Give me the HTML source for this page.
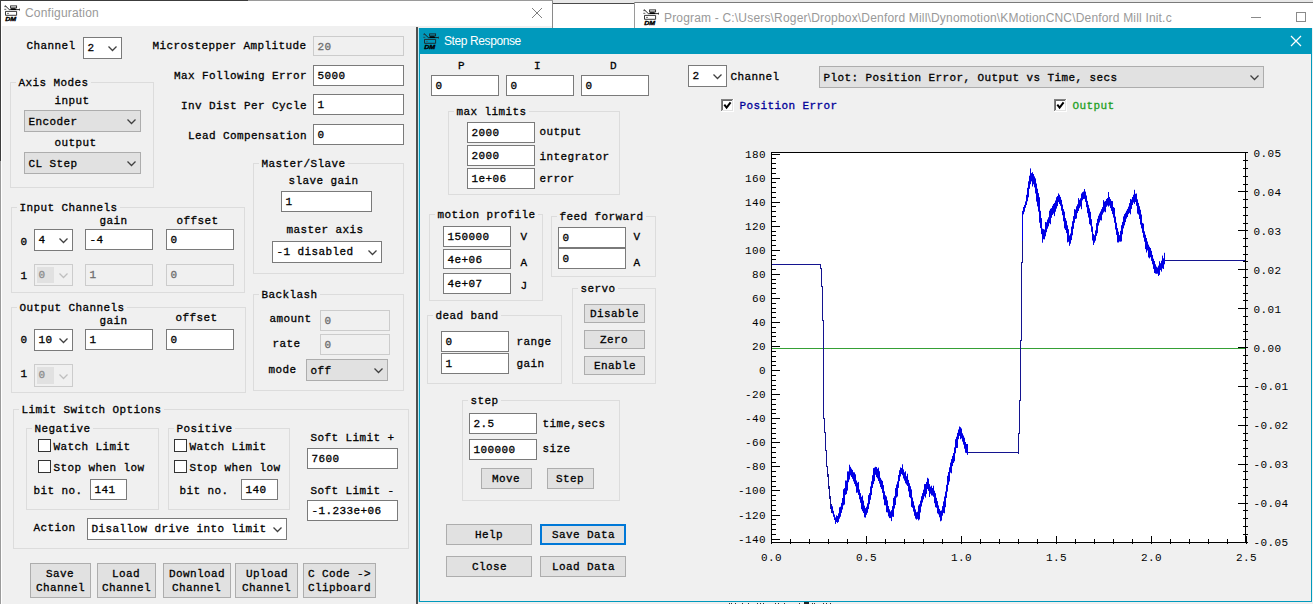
<!DOCTYPE html><html><head><meta charset="utf-8"><style>
*{margin:0;padding:0}
html,body{width:1313px;height:604px;overflow:hidden;background:#f0f0f0;position:relative}
.a{position:absolute}
.m{position:absolute;font:11px 'Liberation Mono',monospace;letter-spacing:0.4px;line-height:13px;white-space:pre;color:#000;-webkit-text-stroke-width:0.3px}
.r{position:absolute;font:11px 'Liberation Mono',monospace;letter-spacing:0.4px;line-height:13px;white-space:pre;color:#000}
.s{position:absolute;font:12px 'Liberation Sans',sans-serif;line-height:15px;white-space:pre}
</style></head><body><div class="a" style="left:552px;top:0px;width:761px;height:2px;background:#e8e8e8;"></div>
<div class="a" style="left:552px;top:2px;width:82px;height:1px;background:#e8e8e8;"></div>
<div class="a" style="left:552px;top:3px;width:82px;height:1px;background:#4a4a4a;"></div>
<div class="a" style="left:552px;top:4px;width:82px;height:24px;background:#ffffff;"></div>
<div class="a" style="left:634px;top:2px;width:679px;height:26px;background:#ffffff;"></div>
<div class="a" style="left:634px;top:2px;width:679px;height:1px;background:#7a7a7a;"></div>
<div class="a" style="left:634px;top:2px;width:1px;height:26px;background:#9a9a9a;"></div>
<div class="a" style="left:0px;top:0px;width:553px;height:604px;background:#f0f0f0;"></div>
<div class="a" style="left:0px;top:0px;width:248px;height:1px;background:#3c3c3c;"></div>
<div class="a" style="left:248px;top:0px;width:305px;height:1px;background:#9a9a9a;"></div>
<div class="a" style="left:0px;top:0px;width:1px;height:161px;background:#3c3c3c;"></div>
<div class="a" style="left:0px;top:161px;width:1px;height:443px;background:#9a9a9a;"></div>
<div class="a" style="left:1px;top:1px;width:551px;height:25px;background:#ffffff;"></div>
<div class="a" style="left:1px;top:26px;width:1px;height:578px;background:#ffffff;"></div>
<div class="a" style="left:552px;top:1px;width:1px;height:603px;background:#8a8a8a;"></div>
<svg class="a" style="left:4px;top:5px" width="17" height="17" viewBox="0 0 17 17">
<path d="M0.8 0.3L5.3 4.6H16" stroke="#111" stroke-width="0.9" fill="none"/>
<path d="M0.3 1.6h2M0.3 4.3h2M15.5 3.6v2" stroke="#333" stroke-width="0.8" fill="none"/>
<rect x="6.6" y="0.9" width="6" height="2" fill="none" stroke="#222" stroke-width="0.9"/>
<path d="M6.6 3.2H11.4L12.2 5H7.2Z" fill="#000"/>
<path d="M1.5 6.4H12.6V10.3H1.5Z" fill="none" stroke="#222" stroke-width="0.9"/>
<path d="M3 8.4H5" stroke="#555" stroke-width="0.8"/>
<text x="1.2" y="15.8" font-family="Liberation Sans" font-weight="bold" font-style="italic" font-size="6" textLength="11" lengthAdjust="spacingAndGlyphs" fill="#000" stroke="#000" stroke-width="0.35">DM</text>
</svg>
<div class="s" style="left:25px;top:6px;color:#999999;letter-spacing:0.2px">Configuration</div>
<svg class="a" style="left:531px;top:7px" width="12" height="12"><path d="M1 1L11 11M11 1L1 11" stroke="#707070" stroke-width="0.9"/></svg>
<svg class="a" style="left:643px;top:9px" width="17" height="17" viewBox="0 0 17 17">
<path d="M0.8 0.3L5.3 4.6H16" stroke="#111" stroke-width="0.9" fill="none"/>
<path d="M0.3 1.6h2M0.3 4.3h2M15.5 3.6v2" stroke="#333" stroke-width="0.8" fill="none"/>
<rect x="6.6" y="0.9" width="6" height="2" fill="none" stroke="#222" stroke-width="0.9"/>
<path d="M6.6 3.2H11.4L12.2 5H7.2Z" fill="#000"/>
<path d="M1.5 6.4H12.6V10.3H1.5Z" fill="none" stroke="#222" stroke-width="0.9"/>
<path d="M3 8.4H5" stroke="#555" stroke-width="0.8"/>
<text x="1.2" y="15.8" font-family="Liberation Sans" font-weight="bold" font-style="italic" font-size="6" textLength="11" lengthAdjust="spacingAndGlyphs" fill="#000" stroke="#000" stroke-width="0.35">DM</text>
</svg>
<div class="s" style="left:664px;top:11px;color:#999999;letter-spacing:0.18px">Program - C:\Users\Roger\Dropbox\Denford Mill\Dynomotion\KMotionCNC\Denford Mill Init.c</div>
<div class="a" style="left:1251px;top:17px;width:10px;height:1px;background:#8a8a8a;"></div>
<div class="a" style="left:1296px;top:12px;width:10px;height:10px;box-shadow:inset 0 0 0 1px #8a8a8a;"></div>
<div class="m" style="left:26.5px;top:40px;">Channel</div>
<div class="a" style="left:83px;top:37px;width:39px;height:22px;background:#ffffff;box-shadow:inset 0 0 0 1px #7a7a7a;"></div>
<div class="m" style="left:87.5px;top:42px;">2</div>
<svg class="a" style="left:108px;top:46px" width="9" height="6"><path d="M0.5 0.5 L4.5 4.5 L8.5 0.5" fill="none" stroke="#404040" stroke-width="1.25"/></svg>
<div class="m" style="left:152.5px;top:40px;">Microstepper Amplitude</div>
<div class="a" style="left:313px;top:36px;width:91px;height:20px;background:#f0f0f0;box-shadow:inset 0 0 0 1px #cccccc;"></div>
<div class="m" style="left:317.5px;top:41px;color:#6d6d6d;">20</div>
<div class="m" style="left:174px;top:70px;">Max Following Error</div>
<div class="a" style="left:313px;top:65px;width:91px;height:21px;background:#ffffff;box-shadow:inset 0 0 0 1px #7a7a7a;"></div>
<div class="m" style="left:317.5px;top:70px;">5000</div>
<div class="m" style="left:181px;top:100px;">Inv Dist Per Cycle</div>
<div class="a" style="left:313px;top:94px;width:91px;height:21px;background:#ffffff;box-shadow:inset 0 0 0 1px #7a7a7a;"></div>
<div class="m" style="left:317.5px;top:99px;">1</div>
<div class="m" style="left:188px;top:130px;">Lead Compensation</div>
<div class="a" style="left:313px;top:124px;width:91px;height:21px;background:#ffffff;box-shadow:inset 0 0 0 1px #7a7a7a;"></div>
<div class="m" style="left:317.5px;top:129px;">0</div>
<div class="a" style="left:10px;top:82px;width:144px;height:106px;box-shadow:inset 0 0 0 1px #dcdcdc;"></div>
<div class="a" style="left:16px;top:77px;width:75px;height:9px;background:#f0f0f0;"></div>
<div class="m" style="left:18.5px;top:77px;">Axis Modes</div>
<div class="m" style="left:54.5px;top:95px;">input</div>
<div class="a" style="left:24px;top:110px;width:117px;height:22px;background:#e1e1e1;box-shadow:inset 0 0 0 1px #adadad;"></div>
<div class="m" style="left:28.5px;top:116px;">Encoder</div>
<svg class="a" style="left:127px;top:119px" width="9" height="6"><path d="M0.5 0.5 L4.5 4.5 L8.5 0.5" fill="none" stroke="#404040" stroke-width="1.25"/></svg>
<div class="m" style="left:54.5px;top:137px;">output</div>
<div class="a" style="left:24px;top:152px;width:117px;height:22px;background:#e1e1e1;box-shadow:inset 0 0 0 1px #adadad;"></div>
<div class="m" style="left:28.5px;top:158px;">CL Step</div>
<svg class="a" style="left:127px;top:161px" width="9" height="6"><path d="M0.5 0.5 L4.5 4.5 L8.5 0.5" fill="none" stroke="#404040" stroke-width="1.25"/></svg>
<div class="a" style="left:253px;top:163px;width:151px;height:111px;box-shadow:inset 0 0 0 1px #dcdcdc;"></div>
<div class="a" style="left:259px;top:158px;width:89px;height:9px;background:#f0f0f0;"></div>
<div class="m" style="left:261.5px;top:158px;">Master/Slave</div>
<div class="m" style="left:288.5px;top:175px;">slave gain</div>
<div class="a" style="left:281px;top:191px;width:91px;height:21px;background:#ffffff;box-shadow:inset 0 0 0 1px #7a7a7a;"></div>
<div class="m" style="left:285.5px;top:196px;">1</div>
<div class="m" style="left:286.5px;top:224px;">master axis</div>
<div class="a" style="left:272px;top:241px;width:110px;height:22px;background:#ffffff;box-shadow:inset 0 0 0 1px #7a7a7a;"></div>
<div class="m" style="left:276.5px;top:246px;">-1 disabled</div>
<svg class="a" style="left:368px;top:250px" width="9" height="6"><path d="M0.5 0.5 L4.5 4.5 L8.5 0.5" fill="none" stroke="#404040" stroke-width="1.25"/></svg>
<div class="a" style="left:11px;top:207px;width:234px;height:86px;box-shadow:inset 0 0 0 1px #dcdcdc;"></div>
<div class="a" style="left:17px;top:202px;width:103px;height:9px;background:#f0f0f0;"></div>
<div class="m" style="left:19.5px;top:202px;">Input Channels</div>
<div class="m" style="left:99.5px;top:215px;">gain</div>
<div class="m" style="left:176.5px;top:215px;">offset</div>
<div class="m" style="left:20.5px;top:236px;">0</div>
<div class="a" style="left:34px;top:229px;width:39px;height:22px;background:#ffffff;box-shadow:inset 0 0 0 1px #7a7a7a;"></div>
<div class="m" style="left:38.5px;top:234px;">4</div>
<svg class="a" style="left:59px;top:238px" width="9" height="6"><path d="M0.5 0.5 L4.5 4.5 L8.5 0.5" fill="none" stroke="#404040" stroke-width="1.25"/></svg>
<div class="a" style="left:85px;top:229px;width:68px;height:21px;background:#ffffff;box-shadow:inset 0 0 0 1px #7a7a7a;"></div>
<div class="m" style="left:89.5px;top:234px;">-4</div>
<div class="a" style="left:166px;top:229px;width:68px;height:21px;background:#ffffff;box-shadow:inset 0 0 0 1px #7a7a7a;"></div>
<div class="m" style="left:170.5px;top:234px;">0</div>
<div class="m" style="left:20.5px;top:270px;">1</div>
<div class="a" style="left:34px;top:264px;width:39px;height:22px;background:#f0f0f0;box-shadow:inset 0 0 0 1px #cccccc;"></div>
<div class="a" style="left:37px;top:267px;width:17px;height:16px;background:#e1e1e1;"></div>
<div class="m" style="left:38.5px;top:269px;color:#8d8d8d;font-weight:normal;">0</div>
<svg class="a" style="left:59px;top:273px" width="9" height="6"><path d="M0.5 0.5 L4.5 4.5 L8.5 0.5" fill="none" stroke="#bfbfbf" stroke-width="1.25"/></svg>
<div class="a" style="left:85px;top:264px;width:68px;height:22px;background:#f0f0f0;box-shadow:inset 0 0 0 1px #cccccc;"></div>
<div class="m" style="left:89.5px;top:269px;color:#6d6d6d;">1</div>
<div class="a" style="left:166px;top:264px;width:68px;height:22px;background:#f0f0f0;box-shadow:inset 0 0 0 1px #cccccc;"></div>
<div class="m" style="left:170.5px;top:269px;color:#6d6d6d;">0</div>
<div class="a" style="left:11px;top:307px;width:235px;height:86px;box-shadow:inset 0 0 0 1px #dcdcdc;"></div>
<div class="a" style="left:17px;top:302px;width:110px;height:9px;background:#f0f0f0;"></div>
<div class="m" style="left:19.5px;top:302px;">Output Channels</div>
<div class="m" style="left:99.5px;top:315px;">gain</div>
<div class="m" style="left:175.5px;top:312px;">offset</div>
<div class="m" style="left:20.5px;top:334px;">0</div>
<div class="a" style="left:34px;top:329px;width:39px;height:22px;background:#ffffff;box-shadow:inset 0 0 0 1px #7a7a7a;"></div>
<div class="m" style="left:38.5px;top:334px;">10</div>
<svg class="a" style="left:59px;top:338px" width="9" height="6"><path d="M0.5 0.5 L4.5 4.5 L8.5 0.5" fill="none" stroke="#404040" stroke-width="1.25"/></svg>
<div class="a" style="left:85px;top:329px;width:68px;height:21px;background:#ffffff;box-shadow:inset 0 0 0 1px #7a7a7a;"></div>
<div class="m" style="left:89.5px;top:334px;">1</div>
<div class="a" style="left:166px;top:329px;width:68px;height:21px;background:#ffffff;box-shadow:inset 0 0 0 1px #7a7a7a;"></div>
<div class="m" style="left:170.5px;top:334px;">0</div>
<div class="m" style="left:20.5px;top:368px;">1</div>
<div class="a" style="left:34px;top:364px;width:39px;height:23px;background:#f0f0f0;box-shadow:inset 0 0 0 1px #cccccc;"></div>
<div class="a" style="left:37px;top:367px;width:17px;height:17px;background:#e1e1e1;"></div>
<div class="m" style="left:38.5px;top:369px;color:#8d8d8d;font-weight:normal;">0</div>
<svg class="a" style="left:59px;top:374px" width="9" height="6"><path d="M0.5 0.5 L4.5 4.5 L8.5 0.5" fill="none" stroke="#bfbfbf" stroke-width="1.25"/></svg>
<div class="a" style="left:253px;top:294px;width:151px;height:97px;box-shadow:inset 0 0 0 1px #dcdcdc;"></div>
<div class="a" style="left:259px;top:289px;width:61px;height:9px;background:#f0f0f0;"></div>
<div class="m" style="left:261.5px;top:289px;">Backlash</div>
<div class="m" style="left:269.5px;top:313px;">amount</div>
<div class="a" style="left:320px;top:310px;width:70px;height:21px;background:#f0f0f0;box-shadow:inset 0 0 0 1px #cccccc;"></div>
<div class="m" style="left:324.5px;top:315px;color:#6d6d6d;">0</div>
<div class="m" style="left:272.5px;top:338px;">rate</div>
<div class="a" style="left:320px;top:334px;width:70px;height:21px;background:#f0f0f0;box-shadow:inset 0 0 0 1px #cccccc;"></div>
<div class="m" style="left:324.5px;top:339px;color:#6d6d6d;">0</div>
<div class="m" style="left:268.5px;top:364px;">mode</div>
<div class="a" style="left:306px;top:359px;width:82px;height:22px;background:#e1e1e1;box-shadow:inset 0 0 0 1px #adadad;"></div>
<div class="m" style="left:310.5px;top:365px;">off</div>
<svg class="a" style="left:374px;top:368px" width="9" height="6"><path d="M0.5 0.5 L4.5 4.5 L8.5 0.5" fill="none" stroke="#404040" stroke-width="1.25"/></svg>
<div class="a" style="left:13px;top:409px;width:396px;height:140px;box-shadow:inset 0 0 0 1px #dcdcdc;"></div>
<div class="a" style="left:19px;top:404px;width:145px;height:9px;background:#f0f0f0;"></div>
<div class="m" style="left:21.5px;top:404px;">Limit Switch Options</div>
<div class="a" style="left:26px;top:428px;width:133px;height:82px;box-shadow:inset 0 0 0 1px #dcdcdc;"></div>
<div class="a" style="left:32px;top:423px;width:61px;height:9px;background:#f0f0f0;"></div>
<div class="m" style="left:34.5px;top:423px;">Negative</div>
<div class="a" style="left:38px;top:439px;width:13px;height:13px;background:#ffffff;box-shadow:inset 0 0 0 1px #333333;"></div>
<div class="m" style="left:53.5px;top:441px;">Watch Limit</div>
<div class="a" style="left:38px;top:460px;width:13px;height:13px;background:#ffffff;box-shadow:inset 0 0 0 1px #333333;"></div>
<div class="m" style="left:53.5px;top:462px;">Stop when low</div>
<div class="m" style="left:33.5px;top:485px;">bit no.</div>
<div class="a" style="left:90px;top:479px;width:37px;height:21px;background:#ffffff;box-shadow:inset 0 0 0 1px #7a7a7a;"></div>
<div class="m" style="left:94.5px;top:484px;">141</div>
<div class="a" style="left:168px;top:428px;width:122px;height:82px;box-shadow:inset 0 0 0 1px #dcdcdc;"></div>
<div class="a" style="left:174px;top:423px;width:61px;height:9px;background:#f0f0f0;"></div>
<div class="m" style="left:176.5px;top:423px;">Positive</div>
<div class="a" style="left:174px;top:439px;width:13px;height:13px;background:#ffffff;box-shadow:inset 0 0 0 1px #333333;"></div>
<div class="m" style="left:189.5px;top:441px;">Watch Limit</div>
<div class="a" style="left:174px;top:460px;width:13px;height:13px;background:#ffffff;box-shadow:inset 0 0 0 1px #333333;"></div>
<div class="m" style="left:189.5px;top:462px;">Stop when low</div>
<div class="m" style="left:179.5px;top:485px;">bit no.</div>
<div class="a" style="left:241px;top:479px;width:37px;height:21px;background:#ffffff;box-shadow:inset 0 0 0 1px #7a7a7a;"></div>
<div class="m" style="left:245.5px;top:484px;">140</div>
<div class="m" style="left:310.5px;top:432px;">Soft Limit +</div>
<div class="a" style="left:307px;top:448px;width:91px;height:21px;background:#ffffff;box-shadow:inset 0 0 0 1px #7a7a7a;"></div>
<div class="m" style="left:311.5px;top:453px;">7600</div>
<div class="m" style="left:310.5px;top:485px;">Soft Limit -</div>
<div class="a" style="left:307px;top:500px;width:91px;height:21px;background:#ffffff;box-shadow:inset 0 0 0 1px #7a7a7a;"></div>
<div class="m" style="left:311.5px;top:505px;">-1.233e+06</div>
<div class="m" style="left:33.5px;top:522px;">Action</div>
<div class="a" style="left:87px;top:518px;width:200px;height:22px;background:#ffffff;box-shadow:inset 0 0 0 1px #7a7a7a;"></div>
<div class="m" style="left:91.5px;top:523px;">Disallow drive into limit</div>
<svg class="a" style="left:273px;top:527px" width="9" height="6"><path d="M0.5 0.5 L4.5 4.5 L8.5 0.5" fill="none" stroke="#404040" stroke-width="1.25"/></svg>
<div class="a" style="left:30px;top:563px;width:61px;height:35px;background:#e1e1e1;box-shadow:inset 0 0 0 1px #adadad;"></div>
<div class="m" style="left:46px;top:568px;">Save</div>
<div class="m" style="left:36px;top:582px;">Channel</div>
<div class="a" style="left:97px;top:563px;width:59px;height:35px;background:#e1e1e1;box-shadow:inset 0 0 0 1px #adadad;"></div>
<div class="m" style="left:112px;top:568px;">Load</div>
<div class="m" style="left:102px;top:582px;">Channel</div>
<div class="a" style="left:163px;top:563px;width:68px;height:35px;background:#e1e1e1;box-shadow:inset 0 0 0 1px #adadad;"></div>
<div class="m" style="left:169px;top:568px;">Download</div>
<div class="m" style="left:172px;top:582px;">Channel</div>
<div class="a" style="left:235px;top:563px;width:63px;height:35px;background:#e1e1e1;box-shadow:inset 0 0 0 1px #adadad;"></div>
<div class="m" style="left:246px;top:568px;">Upload</div>
<div class="m" style="left:242px;top:582px;">Channel</div>
<div class="a" style="left:303px;top:563px;width:73px;height:35px;background:#e1e1e1;box-shadow:inset 0 0 0 1px #adadad;"></div>
<div class="m" style="left:308px;top:568px;">C Code -&gt;</div>
<div class="m" style="left:308px;top:582px;">Clipboard</div>
<div class="a" style="left:416px;top:27px;width:2px;height:577px;background:#505050;"></div>
<div class="a" style="left:418px;top:28px;width:1px;height:574px;background:#b8eaf4;"></div>
<div class="a" style="left:419px;top:28px;width:893px;height:574px;background:#0099bc;"></div>
<div class="a" style="left:420px;top:54px;width:891px;height:547px;background:#f0f0f0;"></div>
<div class="a" style="left:418px;top:602px;width:895px;height:2px;background:#efefef;"></div>
<svg class="a" style="left:423px;top:33px" width="17" height="17" viewBox="0 0 17 17">
<path d="M0.8 0.3L5.3 4.6H16" stroke="#111" stroke-width="0.9" fill="none"/>
<path d="M0.3 1.6h2M0.3 4.3h2M15.5 3.6v2" stroke="#333" stroke-width="0.8" fill="none"/>
<rect x="6.6" y="0.9" width="6" height="2" fill="none" stroke="#222" stroke-width="0.9"/>
<path d="M6.6 3.2H11.4L12.2 5H7.2Z" fill="#000"/>
<path d="M1.5 6.4H12.6V10.3H1.5Z" fill="none" stroke="#222" stroke-width="0.9"/>
<path d="M3 8.4H5" stroke="#555" stroke-width="0.8"/>
<text x="1.2" y="15.8" font-family="Liberation Sans" font-weight="bold" font-style="italic" font-size="6" textLength="11" lengthAdjust="spacingAndGlyphs" fill="#000" stroke="#000" stroke-width="0.35">DM</text>
</svg>
<div class="a" style="left:729px;top:603px;width:1px;height:1px;background:#333333;"></div>
<div class="a" style="left:731px;top:603px;width:1px;height:1px;background:#333333;"></div>
<div class="a" style="left:735px;top:603px;width:1px;height:1px;background:#333333;"></div>
<div class="a" style="left:742px;top:603px;width:1px;height:1px;background:#333333;"></div>
<div class="a" style="left:748px;top:603px;width:1px;height:1px;background:#333333;"></div>
<div class="a" style="left:757px;top:603px;width:1px;height:1px;background:#333333;"></div>
<div class="a" style="left:760px;top:603px;width:1px;height:1px;background:#333333;"></div>
<div class="a" style="left:763px;top:603px;width:1px;height:1px;background:#333333;"></div>
<div class="a" style="left:775px;top:603px;width:1px;height:1px;background:#333333;"></div>
<div class="a" style="left:778px;top:603px;width:1px;height:1px;background:#333333;"></div>
<div class="a" style="left:784px;top:603px;width:1px;height:1px;background:#333333;"></div>
<div class="a" style="left:799px;top:603px;width:1px;height:1px;background:#333333;"></div>
<div class="a" style="left:812px;top:603px;width:1px;height:1px;background:#333333;"></div>
<div class="a" style="left:814px;top:603px;width:1px;height:1px;background:#333333;"></div>
<div class="a" style="left:823px;top:603px;width:1px;height:1px;background:#333333;"></div>
<div class="a" style="left:826px;top:603px;width:1px;height:1px;background:#333333;"></div>
<div class="a" style="left:830px;top:603px;width:1px;height:1px;background:#333333;"></div>
<div class="a" style="left:804px;top:602px;width:5px;height:2px;background:#222222;"></div>
<div class="s" style="left:444px;top:34px;color:#ffffff;letter-spacing:-0.4px">Step Response</div>
<svg class="a" style="left:1290px;top:35px" width="12" height="12"><path d="M1 1L11 11M11 1L1 11" stroke="#ffffff" stroke-width="1.2"/></svg>
<div class="m" style="left:458px;top:60px;">P</div>
<div class="m" style="left:534px;top:60px;">I</div>
<div class="m" style="left:610px;top:60px;">D</div>
<div class="a" style="left:431px;top:75px;width:68px;height:21px;background:#ffffff;box-shadow:inset 0 0 0 1px #7a7a7a;"></div>
<div class="m" style="left:435.5px;top:80px;">0</div>
<div class="a" style="left:506px;top:75px;width:68px;height:21px;background:#ffffff;box-shadow:inset 0 0 0 1px #7a7a7a;"></div>
<div class="m" style="left:510.5px;top:80px;">0</div>
<div class="a" style="left:581px;top:75px;width:68px;height:21px;background:#ffffff;box-shadow:inset 0 0 0 1px #7a7a7a;"></div>
<div class="m" style="left:585.5px;top:80px;">0</div>
<div class="a" style="left:448px;top:111px;width:172px;height:84px;box-shadow:inset 0 0 0 1px #dcdcdc;"></div>
<div class="a" style="left:454px;top:106px;width:75px;height:9px;background:#f0f0f0;"></div>
<div class="m" style="left:456.5px;top:106px;">max limits</div>
<div class="a" style="left:467px;top:122px;width:68px;height:21px;background:#ffffff;box-shadow:inset 0 0 0 1px #7a7a7a;"></div>
<div class="m" style="left:471.5px;top:127px;">2000</div>
<div class="m" style="left:539.5px;top:126px;">output</div>
<div class="a" style="left:467px;top:145px;width:68px;height:21px;background:#ffffff;box-shadow:inset 0 0 0 1px #7a7a7a;"></div>
<div class="m" style="left:471.5px;top:150px;">2000</div>
<div class="m" style="left:539.5px;top:151px;">integrator</div>
<div class="a" style="left:467px;top:168px;width:68px;height:21px;background:#ffffff;box-shadow:inset 0 0 0 1px #7a7a7a;"></div>
<div class="m" style="left:471.5px;top:173px;">1e+06</div>
<div class="m" style="left:539.5px;top:173px;">error</div>
<div class="a" style="left:429px;top:214px;width:114px;height:87px;box-shadow:inset 0 0 0 1px #dcdcdc;"></div>
<div class="a" style="left:435px;top:209px;width:103px;height:9px;background:#f0f0f0;"></div>
<div class="m" style="left:437.5px;top:209px;">motion profile</div>
<div class="a" style="left:443px;top:226px;width:68px;height:21px;background:#ffffff;box-shadow:inset 0 0 0 1px #7a7a7a;"></div>
<div class="m" style="left:447.5px;top:231px;">150000</div>
<div class="m" style="left:520.5px;top:231px;">V</div>
<div class="a" style="left:443px;top:249px;width:68px;height:20px;background:#ffffff;box-shadow:inset 0 0 0 1px #7a7a7a;"></div>
<div class="m" style="left:447.5px;top:254px;">4e+06</div>
<div class="m" style="left:520.5px;top:257px;">A</div>
<div class="a" style="left:443px;top:273px;width:68px;height:21px;background:#ffffff;box-shadow:inset 0 0 0 1px #7a7a7a;"></div>
<div class="m" style="left:447.5px;top:278px;">4e+07</div>
<div class="m" style="left:520.5px;top:280px;">J</div>
<div class="a" style="left:551px;top:216px;width:105px;height:61px;box-shadow:inset 0 0 0 1px #dcdcdc;"></div>
<div class="a" style="left:557px;top:211px;width:89px;height:9px;background:#f0f0f0;"></div>
<div class="m" style="left:559.5px;top:211px;">feed forward</div>
<div class="a" style="left:558px;top:227px;width:68px;height:21px;background:#ffffff;box-shadow:inset 0 0 0 1px #7a7a7a;"></div>
<div class="m" style="left:562.5px;top:232px;">0</div>
<div class="m" style="left:633.5px;top:231px;">V</div>
<div class="a" style="left:558px;top:248px;width:68px;height:21px;background:#ffffff;box-shadow:inset 0 0 0 1px #7a7a7a;"></div>
<div class="m" style="left:562.5px;top:253px;">0</div>
<div class="m" style="left:633.5px;top:257px;">A</div>
<div class="a" style="left:572px;top:288px;width:84px;height:96px;box-shadow:inset 0 0 0 1px #dcdcdc;"></div>
<div class="a" style="left:578px;top:283px;width:40px;height:9px;background:#f0f0f0;"></div>
<div class="m" style="left:580.5px;top:283px;">servo</div>
<div class="a" style="left:584px;top:304px;width:61px;height:19px;background:#e1e1e1;box-shadow:inset 0 0 0 1px #adadad;"></div>
<div class="m" style="left:590px;top:308px;">Disable</div>
<div class="a" style="left:584px;top:330px;width:61px;height:19px;background:#e1e1e1;box-shadow:inset 0 0 0 1px #adadad;"></div>
<div class="m" style="left:600px;top:334px;">Zero</div>
<div class="a" style="left:584px;top:356px;width:61px;height:19px;background:#e1e1e1;box-shadow:inset 0 0 0 1px #adadad;"></div>
<div class="m" style="left:594px;top:360px;">Enable</div>
<div class="a" style="left:427px;top:315px;width:135px;height:69px;box-shadow:inset 0 0 0 1px #dcdcdc;"></div>
<div class="a" style="left:433px;top:310px;width:68px;height:9px;background:#f0f0f0;"></div>
<div class="m" style="left:435.5px;top:310px;">dead band</div>
<div class="a" style="left:441px;top:331px;width:68px;height:21px;background:#ffffff;box-shadow:inset 0 0 0 1px #7a7a7a;"></div>
<div class="m" style="left:445.5px;top:336px;">0</div>
<div class="m" style="left:516.5px;top:336px;">range</div>
<div class="a" style="left:441px;top:353px;width:68px;height:21px;background:#ffffff;box-shadow:inset 0 0 0 1px #7a7a7a;"></div>
<div class="m" style="left:445.5px;top:358px;">1</div>
<div class="m" style="left:516.5px;top:358px;">gain</div>
<div class="a" style="left:462px;top:400px;width:158px;height:101px;box-shadow:inset 0 0 0 1px #dcdcdc;"></div>
<div class="a" style="left:468px;top:395px;width:33px;height:9px;background:#f0f0f0;"></div>
<div class="m" style="left:470.5px;top:395px;">step</div>
<div class="a" style="left:469px;top:413px;width:68px;height:21px;background:#ffffff;box-shadow:inset 0 0 0 1px #7a7a7a;"></div>
<div class="m" style="left:473.5px;top:418px;">2.5</div>
<div class="m" style="left:542.5px;top:418px;">time,secs</div>
<div class="a" style="left:469px;top:439px;width:68px;height:21px;background:#ffffff;box-shadow:inset 0 0 0 1px #7a7a7a;"></div>
<div class="m" style="left:473.5px;top:444px;">100000</div>
<div class="m" style="left:542.5px;top:443px;">size</div>
<div class="a" style="left:481px;top:468px;width:51px;height:21px;background:#e1e1e1;box-shadow:inset 0 0 0 1px #adadad;"></div>
<div class="m" style="left:492px;top:473px;">Move</div>
<div class="a" style="left:547px;top:468px;width:47px;height:21px;background:#e1e1e1;box-shadow:inset 0 0 0 1px #adadad;"></div>
<div class="m" style="left:556px;top:473px;">Step</div>
<div class="a" style="left:446px;top:524px;width:86px;height:21px;background:#e1e1e1;box-shadow:inset 0 0 0 1px #adadad;"></div>
<div class="m" style="left:475px;top:529px;">Help</div>
<div class="a" style="left:540px;top:524px;width:86px;height:21px;background:#e1e1e1;box-shadow:inset 0 0 0 1px #0078d7;box-shadow:inset 0 0 0 2px #0078d7;"></div>
<div class="m" style="left:552px;top:529px;">Save Data</div>
<div class="a" style="left:446px;top:556px;width:86px;height:21px;background:#e1e1e1;box-shadow:inset 0 0 0 1px #adadad;"></div>
<div class="m" style="left:472px;top:561px;">Close</div>
<div class="a" style="left:540px;top:556px;width:86px;height:21px;background:#e1e1e1;box-shadow:inset 0 0 0 1px #adadad;"></div>
<div class="m" style="left:552px;top:561px;">Load Data</div>
<div class="a" style="left:688px;top:65px;width:39px;height:22px;background:#ffffff;box-shadow:inset 0 0 0 1px #7a7a7a;"></div>
<div class="m" style="left:692.5px;top:70px;">2</div>
<svg class="a" style="left:713px;top:74px" width="9" height="6"><path d="M0.5 0.5 L4.5 4.5 L8.5 0.5" fill="none" stroke="#404040" stroke-width="1.25"/></svg>
<div class="m" style="left:730.5px;top:71px;">Channel</div>
<div class="a" style="left:819px;top:66px;width:445px;height:22px;background:#e1e1e1;box-shadow:inset 0 0 0 1px #adadad;"></div>
<div class="m" style="left:823.5px;top:72px;">Plot: Position Error, Output vs Time, secs</div>
<svg class="a" style="left:1250px;top:75px" width="9" height="6"><path d="M0.5 0.5 L4.5 4.5 L8.5 0.5" fill="none" stroke="#404040" stroke-width="1.25"/></svg>
<div class="a" style="left:721px;top:99px;width:13px;height:13px;background:#ffffff;"></div>
<div class="a" style="left:721px;top:99px;width:12px;height:1px;background:#808080;"></div>
<div class="a" style="left:721px;top:99px;width:1px;height:12px;background:#808080;"></div>
<div class="a" style="left:722px;top:100px;width:10px;height:1px;background:#696969;"></div>
<div class="a" style="left:722px;top:100px;width:1px;height:10px;background:#696969;"></div>
<div class="a" style="left:722px;top:110px;width:11px;height:1px;background:#e3e3e3;"></div>
<div class="a" style="left:732px;top:100px;width:1px;height:11px;background:#e3e3e3;"></div>
<svg class="a" style="left:721px;top:99px" width="13" height="13"><path d="M3.3 5.6L5.6 8.6L9.6 3.4" fill="none" stroke="#000" stroke-width="2"/></svg>
<div class="m" style="left:739.5px;top:100px;color:#000099;">Position Error</div>
<div class="a" style="left:1054px;top:99px;width:13px;height:13px;background:#ffffff;"></div>
<div class="a" style="left:1054px;top:99px;width:12px;height:1px;background:#808080;"></div>
<div class="a" style="left:1054px;top:99px;width:1px;height:12px;background:#808080;"></div>
<div class="a" style="left:1055px;top:100px;width:10px;height:1px;background:#696969;"></div>
<div class="a" style="left:1055px;top:100px;width:1px;height:10px;background:#696969;"></div>
<div class="a" style="left:1055px;top:110px;width:11px;height:1px;background:#e3e3e3;"></div>
<div class="a" style="left:1065px;top:100px;width:1px;height:11px;background:#e3e3e3;"></div>
<svg class="a" style="left:1054px;top:99px" width="13" height="13"><path d="M3.3 5.6L5.6 8.6L9.6 3.4" fill="none" stroke="#000" stroke-width="2"/></svg>
<div class="m" style="left:1072.5px;top:100px;color:#22a022;">Output</div>
<svg class="a" style="left:0;top:0" width="1313" height="604" shape-rendering="auto"><rect x="772" y="153" width="473" height="389" fill="#ffffff"/><rect x="771" y="152" width="475" height="1" fill="#000"/><rect x="771" y="152" width="1" height="391" fill="#000"/><rect x="771" y="542" width="476" height="1" fill="#000"/><rect x="1245" y="152" width="1" height="391" fill="#000"/><rect x="772" y="154" width="8" height="1" fill="#000"/><rect x="772" y="158" width="4" height="1" fill="#000"/><rect x="772" y="163" width="4" height="1" fill="#000"/><rect x="772" y="168" width="4" height="1" fill="#000"/><rect x="772" y="173" width="4" height="1" fill="#000"/><rect x="772" y="178" width="8" height="1" fill="#000"/><rect x="772" y="182" width="4" height="1" fill="#000"/><rect x="772" y="187" width="4" height="1" fill="#000"/><rect x="772" y="192" width="4" height="1" fill="#000"/><rect x="772" y="197" width="4" height="1" fill="#000"/><rect x="772" y="202" width="8" height="1" fill="#000"/><rect x="772" y="206" width="4" height="1" fill="#000"/><rect x="772" y="211" width="4" height="1" fill="#000"/><rect x="772" y="216" width="4" height="1" fill="#000"/><rect x="772" y="221" width="4" height="1" fill="#000"/><rect x="772" y="226" width="8" height="1" fill="#000"/><rect x="772" y="231" width="4" height="1" fill="#000"/><rect x="772" y="235" width="4" height="1" fill="#000"/><rect x="772" y="240" width="4" height="1" fill="#000"/><rect x="772" y="245" width="4" height="1" fill="#000"/><rect x="772" y="250" width="8" height="1" fill="#000"/><rect x="772" y="255" width="4" height="1" fill="#000"/><rect x="772" y="259" width="4" height="1" fill="#000"/><rect x="772" y="264" width="4" height="1" fill="#000"/><rect x="772" y="269" width="4" height="1" fill="#000"/><rect x="772" y="274" width="8" height="1" fill="#000"/><rect x="772" y="279" width="4" height="1" fill="#000"/><rect x="772" y="283" width="4" height="1" fill="#000"/><rect x="772" y="288" width="4" height="1" fill="#000"/><rect x="772" y="293" width="4" height="1" fill="#000"/><rect x="772" y="298" width="8" height="1" fill="#000"/><rect x="772" y="303" width="4" height="1" fill="#000"/><rect x="772" y="308" width="4" height="1" fill="#000"/><rect x="772" y="312" width="4" height="1" fill="#000"/><rect x="772" y="317" width="4" height="1" fill="#000"/><rect x="772" y="322" width="8" height="1" fill="#000"/><rect x="772" y="327" width="4" height="1" fill="#000"/><rect x="772" y="332" width="4" height="1" fill="#000"/><rect x="772" y="336" width="4" height="1" fill="#000"/><rect x="772" y="341" width="4" height="1" fill="#000"/><rect x="772" y="346" width="8" height="1" fill="#000"/><rect x="772" y="351" width="4" height="1" fill="#000"/><rect x="772" y="356" width="4" height="1" fill="#000"/><rect x="772" y="361" width="4" height="1" fill="#000"/><rect x="772" y="365" width="4" height="1" fill="#000"/><rect x="772" y="370" width="8" height="1" fill="#000"/><rect x="772" y="375" width="4" height="1" fill="#000"/><rect x="772" y="380" width="4" height="1" fill="#000"/><rect x="772" y="385" width="4" height="1" fill="#000"/><rect x="772" y="389" width="4" height="1" fill="#000"/><rect x="772" y="394" width="8" height="1" fill="#000"/><rect x="772" y="399" width="4" height="1" fill="#000"/><rect x="772" y="404" width="4" height="1" fill="#000"/><rect x="772" y="409" width="4" height="1" fill="#000"/><rect x="772" y="413" width="4" height="1" fill="#000"/><rect x="772" y="418" width="8" height="1" fill="#000"/><rect x="772" y="423" width="4" height="1" fill="#000"/><rect x="772" y="428" width="4" height="1" fill="#000"/><rect x="772" y="433" width="4" height="1" fill="#000"/><rect x="772" y="438" width="4" height="1" fill="#000"/><rect x="772" y="442" width="8" height="1" fill="#000"/><rect x="772" y="447" width="4" height="1" fill="#000"/><rect x="772" y="452" width="4" height="1" fill="#000"/><rect x="772" y="457" width="4" height="1" fill="#000"/><rect x="772" y="462" width="4" height="1" fill="#000"/><rect x="772" y="466" width="8" height="1" fill="#000"/><rect x="772" y="471" width="4" height="1" fill="#000"/><rect x="772" y="476" width="4" height="1" fill="#000"/><rect x="772" y="481" width="4" height="1" fill="#000"/><rect x="772" y="486" width="4" height="1" fill="#000"/><rect x="772" y="490" width="8" height="1" fill="#000"/><rect x="772" y="495" width="4" height="1" fill="#000"/><rect x="772" y="500" width="4" height="1" fill="#000"/><rect x="772" y="505" width="4" height="1" fill="#000"/><rect x="772" y="510" width="4" height="1" fill="#000"/><rect x="772" y="515" width="8" height="1" fill="#000"/><rect x="772" y="519" width="4" height="1" fill="#000"/><rect x="772" y="524" width="4" height="1" fill="#000"/><rect x="772" y="529" width="4" height="1" fill="#000"/><rect x="772" y="534" width="4" height="1" fill="#000"/><rect x="772" y="539" width="8" height="1" fill="#000"/><rect x="1238" y="152" width="10" height="1" fill="#000"/><rect x="1243" y="160" width="5" height="1" fill="#000"/><rect x="1243" y="168" width="5" height="1" fill="#000"/><rect x="1243" y="176" width="5" height="1" fill="#000"/><rect x="1243" y="184" width="5" height="1" fill="#000"/><rect x="1238" y="191" width="10" height="1" fill="#000"/><rect x="1243" y="199" width="5" height="1" fill="#000"/><rect x="1243" y="207" width="5" height="1" fill="#000"/><rect x="1243" y="215" width="5" height="1" fill="#000"/><rect x="1243" y="223" width="5" height="1" fill="#000"/><rect x="1238" y="230" width="10" height="1" fill="#000"/><rect x="1243" y="238" width="5" height="1" fill="#000"/><rect x="1243" y="246" width="5" height="1" fill="#000"/><rect x="1243" y="254" width="5" height="1" fill="#000"/><rect x="1243" y="261" width="5" height="1" fill="#000"/><rect x="1238" y="269" width="10" height="1" fill="#000"/><rect x="1243" y="277" width="5" height="1" fill="#000"/><rect x="1243" y="285" width="5" height="1" fill="#000"/><rect x="1243" y="293" width="5" height="1" fill="#000"/><rect x="1243" y="300" width="5" height="1" fill="#000"/><rect x="1238" y="308" width="10" height="1" fill="#000"/><rect x="1243" y="316" width="5" height="1" fill="#000"/><rect x="1243" y="324" width="5" height="1" fill="#000"/><rect x="1243" y="331" width="5" height="1" fill="#000"/><rect x="1243" y="339" width="5" height="1" fill="#000"/><rect x="1238" y="347" width="10" height="1" fill="#000"/><rect x="1243" y="355" width="5" height="1" fill="#000"/><rect x="1243" y="363" width="5" height="1" fill="#000"/><rect x="1243" y="370" width="5" height="1" fill="#000"/><rect x="1243" y="378" width="5" height="1" fill="#000"/><rect x="1238" y="386" width="10" height="1" fill="#000"/><rect x="1243" y="394" width="5" height="1" fill="#000"/><rect x="1243" y="401" width="5" height="1" fill="#000"/><rect x="1243" y="409" width="5" height="1" fill="#000"/><rect x="1243" y="417" width="5" height="1" fill="#000"/><rect x="1238" y="425" width="10" height="1" fill="#000"/><rect x="1243" y="433" width="5" height="1" fill="#000"/><rect x="1243" y="440" width="5" height="1" fill="#000"/><rect x="1243" y="448" width="5" height="1" fill="#000"/><rect x="1243" y="456" width="5" height="1" fill="#000"/><rect x="1238" y="464" width="10" height="1" fill="#000"/><rect x="1243" y="471" width="5" height="1" fill="#000"/><rect x="1243" y="479" width="5" height="1" fill="#000"/><rect x="1243" y="487" width="5" height="1" fill="#000"/><rect x="1243" y="495" width="5" height="1" fill="#000"/><rect x="1238" y="503" width="10" height="1" fill="#000"/><rect x="1243" y="510" width="5" height="1" fill="#000"/><rect x="1243" y="518" width="5" height="1" fill="#000"/><rect x="1243" y="526" width="5" height="1" fill="#000"/><rect x="1243" y="534" width="5" height="1" fill="#000"/><rect x="1238" y="542" width="10" height="1" fill="#000"/><rect x="771" y="536" width="1" height="8" fill="#000"/><rect x="790" y="539" width="1" height="5" fill="#000"/><rect x="809" y="539" width="1" height="5" fill="#000"/><rect x="828" y="539" width="1" height="5" fill="#000"/><rect x="847" y="539" width="1" height="5" fill="#000"/><rect x="866" y="536" width="1" height="8" fill="#000"/><rect x="885" y="539" width="1" height="5" fill="#000"/><rect x="904" y="539" width="1" height="5" fill="#000"/><rect x="923" y="539" width="1" height="5" fill="#000"/><rect x="942" y="539" width="1" height="5" fill="#000"/><rect x="961" y="536" width="1" height="8" fill="#000"/><rect x="980" y="539" width="1" height="5" fill="#000"/><rect x="999" y="539" width="1" height="5" fill="#000"/><rect x="1018" y="539" width="1" height="5" fill="#000"/><rect x="1037" y="539" width="1" height="5" fill="#000"/><rect x="1056" y="536" width="1" height="8" fill="#000"/><rect x="1075" y="539" width="1" height="5" fill="#000"/><rect x="1094" y="539" width="1" height="5" fill="#000"/><rect x="1113" y="539" width="1" height="5" fill="#000"/><rect x="1132" y="539" width="1" height="5" fill="#000"/><rect x="1151" y="536" width="1" height="8" fill="#000"/><rect x="1170" y="539" width="1" height="5" fill="#000"/><rect x="1189" y="539" width="1" height="5" fill="#000"/><rect x="1208" y="539" width="1" height="5" fill="#000"/><rect x="1227" y="539" width="1" height="5" fill="#000"/><rect x="1246" y="536" width="1" height="8" fill="#000"/><rect x="772" y="348" width="473" height="1" fill="#35a035"/><rect x="772" y="264" width="48" height="1" fill="#141490"/><rect x="968" y="452" width="50" height="1" fill="#141490"/><rect x="1165" y="260" width="80" height="1" fill="#141490"/><rect x="820" y="264" width="1" height="5" fill="#141490"/><rect x="821" y="268" width="1" height="19" fill="#141490"/><rect x="822" y="286" width="1" height="35" fill="#141490"/><rect x="823" y="320" width="1" height="99" fill="#141490"/><rect x="824" y="418" width="1" height="15" fill="#141490"/><rect x="825" y="432" width="1" height="19" fill="#141490"/><rect x="826" y="450" width="1" height="17" fill="#141490"/><rect x="827" y="466" width="1" height="11" fill="#141490"/><rect x="828" y="474" width="1" height="15" fill="#141490"/><rect x="829" y="486" width="1" height="13" fill="#141490"/><rect x="830" y="496" width="1" height="13" fill="#141490"/><rect x="831" y="504" width="1" height="9" fill="#141490"/><rect x="1018" y="433" width="1" height="21" fill="#141490"/><rect x="1019" y="400" width="1" height="34" fill="#141490"/><rect x="1020" y="340" width="1" height="61" fill="#141490"/><rect x="1021" y="262" width="1" height="79" fill="#141490"/><rect x="1022" y="240" width="1" height="23" fill="#141490"/><g fill="#0000e6"><rect x="831" y="505.1" width="1" height="4.4"/><rect x="832" y="506.3" width="1" height="7.1"/><rect x="833" y="510.8" width="1" height="6.0"/><rect x="834" y="514.5" width="1" height="5.5"/><rect x="835" y="517.4" width="1" height="6.5"/><rect x="836" y="515.3" width="1" height="6.7"/><rect x="837" y="516.0" width="1" height="6.9"/><rect x="838" y="513.3" width="1" height="8.6"/><rect x="839" y="507.3" width="1" height="11.4"/><rect x="840" y="506.7" width="1" height="10.0"/><rect x="841" y="502.9" width="1" height="10.0"/><rect x="842" y="498.0" width="1" height="11.5"/><rect x="843" y="489.2" width="1" height="16.2"/><rect x="844" y="488.1" width="1" height="16.5"/><rect x="845" y="480.5" width="1" height="14.4"/><rect x="846" y="480.6" width="1" height="13.5"/><rect x="847" y="471.4" width="1" height="19.2"/><rect x="848" y="471.4" width="1" height="10.8"/><rect x="849" y="464.7" width="1" height="14.8"/><rect x="850" y="466.8" width="1" height="8.6"/><rect x="851" y="468.6" width="1" height="8.4"/><rect x="852" y="469.9" width="1" height="8.9"/><rect x="853" y="472.2" width="1" height="9.2"/><rect x="854" y="472.4" width="1" height="11.5"/><rect x="855" y="474.3" width="1" height="12.0"/><rect x="856" y="480.5" width="1" height="12.3"/><rect x="857" y="482.7" width="1" height="9.8"/><rect x="858" y="481.9" width="1" height="13.1"/><rect x="859" y="489.5" width="1" height="9.8"/><rect x="860" y="493.1" width="1" height="9.7"/><rect x="861" y="496.8" width="1" height="12.4"/><rect x="862" y="495.5" width="1" height="15.7"/><rect x="863" y="500.6" width="1" height="12.4"/><rect x="864" y="505.6" width="1" height="11.7"/><rect x="865" y="508.1" width="1" height="9.5"/><rect x="866" y="506.7" width="1" height="8.1"/><rect x="867" y="503.3" width="1" height="9.5"/><rect x="868" y="495.1" width="1" height="14.0"/><rect x="869" y="493.1" width="1" height="11.1"/><rect x="870" y="486.4" width="1" height="13.4"/><rect x="871" y="481.3" width="1" height="13.8"/><rect x="872" y="475.2" width="1" height="12.7"/><rect x="873" y="468.1" width="1" height="16.0"/><rect x="874" y="467.6" width="1" height="13.6"/><rect x="875" y="466.8" width="1" height="8.0"/><rect x="876" y="467.0" width="1" height="10.1"/><rect x="877" y="468.7" width="1" height="9.7"/><rect x="878" y="467.6" width="1" height="13.4"/><rect x="879" y="471.2" width="1" height="12.4"/><rect x="880" y="477.8" width="1" height="9.3"/><rect x="881" y="479.7" width="1" height="9.4"/><rect x="882" y="480.9" width="1" height="12.0"/><rect x="883" y="485.1" width="1" height="14.3"/><rect x="884" y="491.3" width="1" height="13.9"/><rect x="885" y="495.2" width="1" height="10.2"/><rect x="886" y="496.5" width="1" height="15.7"/><rect x="887" y="500.4" width="1" height="12.1"/><rect x="888" y="506.0" width="1" height="10.4"/><rect x="889" y="509.3" width="1" height="8.8"/><rect x="890" y="511.4" width="1" height="6.7"/><rect x="891" y="510.1" width="1" height="11.0"/><rect x="892" y="506.1" width="1" height="10.6"/><rect x="893" y="497.9" width="1" height="19.0"/><rect x="894" y="496.2" width="1" height="12.3"/><rect x="895" y="488.1" width="1" height="16.9"/><rect x="896" y="484.5" width="1" height="13.1"/><rect x="897" y="481.4" width="1" height="15.1"/><rect x="898" y="475.0" width="1" height="12.9"/><rect x="899" y="470.2" width="1" height="10.9"/><rect x="900" y="467.4" width="1" height="9.1"/><rect x="901" y="468.0" width="1" height="6.0"/><rect x="902" y="464.3" width="1" height="10.9"/><rect x="903" y="469.4" width="1" height="9.1"/><rect x="904" y="472.3" width="1" height="8.3"/><rect x="905" y="471.3" width="1" height="12.0"/><rect x="906" y="476.2" width="1" height="8.4"/><rect x="907" y="473.7" width="1" height="12.3"/><rect x="908" y="479.9" width="1" height="11.5"/><rect x="909" y="483.2" width="1" height="13.9"/><rect x="910" y="486.2" width="1" height="12.0"/><rect x="911" y="489.4" width="1" height="17.5"/><rect x="912" y="497.5" width="1" height="10.3"/><rect x="913" y="501.3" width="1" height="10.3"/><rect x="914" y="505.5" width="1" height="10.3"/><rect x="915" y="509.4" width="1" height="9.2"/><rect x="916" y="512.2" width="1" height="7.4"/><rect x="917" y="511.7" width="1" height="7.2"/><rect x="918" y="505.5" width="1" height="14.9"/><rect x="919" y="504.1" width="1" height="15.3"/><rect x="920" y="500.6" width="1" height="11.9"/><rect x="921" y="496.2" width="1" height="10.3"/><rect x="922" y="493.1" width="1" height="9.4"/><rect x="923" y="489.7" width="1" height="9.7"/><rect x="924" y="484.1" width="1" height="12.2"/><rect x="925" y="484.0" width="1" height="13.6"/><rect x="926" y="481.9" width="1" height="12.0"/><rect x="927" y="477.8" width="1" height="11.2"/><rect x="928" y="478.7" width="1" height="12.2"/><rect x="929" y="484.1" width="1" height="12.9"/><rect x="930" y="486.6" width="1" height="7.1"/><rect x="931" y="485.7" width="1" height="9.7"/><rect x="932" y="488.0" width="1" height="7.6"/><rect x="933" y="485.7" width="1" height="11.1"/><rect x="934" y="490.7" width="1" height="12.5"/><rect x="935" y="493.2" width="1" height="14.0"/><rect x="936" y="497.8" width="1" height="10.0"/><rect x="937" y="501.1" width="1" height="12.2"/><rect x="938" y="505.4" width="1" height="9.0"/><rect x="939" y="508.9" width="1" height="8.4"/><rect x="940" y="510.8" width="1" height="10.5"/><rect x="941" y="510.4" width="1" height="10.2"/><rect x="942" y="506.1" width="1" height="9.6"/><rect x="943" y="501.4" width="1" height="11.5"/><rect x="944" y="496.5" width="1" height="16.8"/><rect x="945" y="491.5" width="1" height="15.7"/><rect x="946" y="484.8" width="1" height="13.1"/><rect x="947" y="475.8" width="1" height="15.8"/><rect x="948" y="472.0" width="1" height="12.9"/><rect x="949" y="467.3" width="1" height="14.2"/><rect x="950" y="462.6" width="1" height="10.0"/><rect x="951" y="459.1" width="1" height="14.2"/><rect x="952" y="455.9" width="1" height="10.2"/><rect x="953" y="453.0" width="1" height="10.0"/><rect x="954" y="447.4" width="1" height="13.9"/><rect x="955" y="439.2" width="1" height="14.1"/><rect x="956" y="436.7" width="1" height="11.3"/><rect x="957" y="432.9" width="1" height="15.0"/><rect x="958" y="429.5" width="1" height="9.7"/><rect x="959" y="426.5" width="1" height="9.4"/><rect x="960" y="427.2" width="1" height="12.0"/><rect x="961" y="428.5" width="1" height="9.9"/><rect x="962" y="433.3" width="1" height="8.3"/><rect x="963" y="435.5" width="1" height="9.1"/><rect x="964" y="437.7" width="1" height="11.0"/><rect x="965" y="442.0" width="1" height="10.7"/><rect x="966" y="444.0" width="1" height="9.1"/><rect x="967" y="444.0" width="1" height="10.9"/></g><g fill="#0000e6"><rect x="1022" y="210.9" width="1" height="30.0"/><rect x="1023" y="207.0" width="1" height="7.3"/><rect x="1024" y="204.9" width="1" height="6.8"/><rect x="1025" y="201.4" width="1" height="6.4"/><rect x="1026" y="194.8" width="1" height="10.2"/><rect x="1027" y="187.8" width="1" height="13.5"/><rect x="1028" y="181.3" width="1" height="16.0"/><rect x="1029" y="175.7" width="1" height="13.1"/><rect x="1030" y="168.4" width="1" height="15.8"/><rect x="1031" y="173.1" width="1" height="8.3"/><rect x="1032" y="172.2" width="1" height="14.3"/><rect x="1033" y="174.0" width="1" height="10.3"/><rect x="1034" y="176.4" width="1" height="11.0"/><rect x="1035" y="178.4" width="1" height="15.1"/><rect x="1036" y="183.5" width="1" height="18.1"/><rect x="1037" y="188.7" width="1" height="17.7"/><rect x="1038" y="193.1" width="1" height="18.5"/><rect x="1039" y="197.2" width="1" height="25.5"/><rect x="1040" y="210.8" width="1" height="17.3"/><rect x="1041" y="218.1" width="1" height="16.0"/><rect x="1042" y="228.6" width="1" height="14.1"/><rect x="1043" y="229.1" width="1" height="10.1"/><rect x="1044" y="229.6" width="1" height="9.8"/><rect x="1045" y="222.0" width="1" height="14.3"/><rect x="1046" y="222.3" width="1" height="9.9"/><rect x="1047" y="219.5" width="1" height="9.2"/><rect x="1048" y="217.3" width="1" height="9.1"/><rect x="1049" y="210.7" width="1" height="12.5"/><rect x="1050" y="208.8" width="1" height="15.4"/><rect x="1051" y="208.1" width="1" height="9.7"/><rect x="1052" y="205.8" width="1" height="9.2"/><rect x="1053" y="204.0" width="1" height="9.6"/><rect x="1054" y="202.9" width="1" height="13.2"/><rect x="1055" y="200.5" width="1" height="11.2"/><rect x="1056" y="197.2" width="1" height="11.4"/><rect x="1057" y="196.0" width="1" height="10.1"/><rect x="1058" y="193.4" width="1" height="8.7"/><rect x="1059" y="194.8" width="1" height="9.2"/><rect x="1060" y="196.9" width="1" height="8.9"/><rect x="1061" y="199.8" width="1" height="10.9"/><rect x="1062" y="204.5" width="1" height="10.7"/><rect x="1063" y="209.1" width="1" height="12.2"/><rect x="1064" y="211.6" width="1" height="16.8"/><rect x="1065" y="218.1" width="1" height="11.9"/><rect x="1066" y="220.7" width="1" height="12.4"/><rect x="1067" y="225.3" width="1" height="17.1"/><rect x="1068" y="229.2" width="1" height="12.6"/><rect x="1069" y="235.4" width="1" height="10.4"/><rect x="1070" y="233.5" width="1" height="10.2"/><rect x="1071" y="226.6" width="1" height="13.5"/><rect x="1072" y="221.2" width="1" height="14.1"/><rect x="1073" y="216.1" width="1" height="12.7"/><rect x="1074" y="209.1" width="1" height="13.7"/><rect x="1075" y="209.6" width="1" height="9.4"/><rect x="1076" y="206.3" width="1" height="12.2"/><rect x="1077" y="204.3" width="1" height="8.8"/><rect x="1078" y="198.1" width="1" height="12.9"/><rect x="1079" y="199.8" width="1" height="8.4"/><rect x="1080" y="198.3" width="1" height="8.2"/><rect x="1081" y="193.5" width="1" height="15.7"/><rect x="1082" y="192.2" width="1" height="8.2"/><rect x="1083" y="191.5" width="1" height="7.5"/><rect x="1084" y="189.0" width="1" height="9.9"/><rect x="1085" y="191.6" width="1" height="10.3"/><rect x="1086" y="195.5" width="1" height="11.7"/><rect x="1087" y="200.9" width="1" height="12.3"/><rect x="1088" y="204.8" width="1" height="12.7"/><rect x="1089" y="208.4" width="1" height="15.7"/><rect x="1090" y="211.8" width="1" height="13.7"/><rect x="1091" y="219.2" width="1" height="12.6"/><rect x="1092" y="226.5" width="1" height="14.0"/><rect x="1093" y="233.9" width="1" height="11.1"/><rect x="1094" y="235.2" width="1" height="7.5"/><rect x="1095" y="230.4" width="1" height="10.3"/><rect x="1096" y="223.1" width="1" height="12.8"/><rect x="1097" y="218.8" width="1" height="14.4"/><rect x="1098" y="215.7" width="1" height="9.9"/><rect x="1099" y="213.5" width="1" height="9.0"/><rect x="1100" y="211.5" width="1" height="8.7"/><rect x="1101" y="209.2" width="1" height="11.3"/><rect x="1102" y="207.1" width="1" height="7.5"/><rect x="1103" y="200.1" width="1" height="12.5"/><rect x="1104" y="201.6" width="1" height="9.9"/><rect x="1105" y="200.9" width="1" height="11.3"/><rect x="1106" y="199.0" width="1" height="7.8"/><rect x="1107" y="198.0" width="1" height="7.5"/><rect x="1108" y="192.0" width="1" height="14.6"/><rect x="1109" y="197.0" width="1" height="8.6"/><rect x="1110" y="199.1" width="1" height="9.0"/><rect x="1111" y="200.9" width="1" height="10.0"/><rect x="1112" y="201.1" width="1" height="13.0"/><rect x="1113" y="207.0" width="1" height="10.6"/><rect x="1114" y="207.9" width="1" height="14.9"/><rect x="1115" y="216.6" width="1" height="12.9"/><rect x="1116" y="222.7" width="1" height="12.2"/><rect x="1117" y="228.1" width="1" height="14.3"/><rect x="1118" y="231.7" width="1" height="10.8"/><rect x="1119" y="235.1" width="1" height="6.4"/><rect x="1120" y="230.8" width="1" height="10.9"/><rect x="1121" y="225.2" width="1" height="16.2"/><rect x="1122" y="221.9" width="1" height="12.4"/><rect x="1123" y="216.4" width="1" height="12.0"/><rect x="1124" y="214.1" width="1" height="11.3"/><rect x="1125" y="212.7" width="1" height="9.4"/><rect x="1126" y="210.7" width="1" height="7.9"/><rect x="1127" y="208.9" width="1" height="8.1"/><rect x="1128" y="206.6" width="1" height="7.5"/><rect x="1129" y="203.1" width="1" height="9.8"/><rect x="1130" y="199.0" width="1" height="15.3"/><rect x="1131" y="199.5" width="1" height="9.4"/><rect x="1132" y="197.0" width="1" height="8.0"/><rect x="1133" y="194.7" width="1" height="7.8"/><rect x="1134" y="189.8" width="1" height="14.1"/><rect x="1135" y="193.8" width="1" height="8.2"/><rect x="1136" y="193.5" width="1" height="12.3"/><rect x="1137" y="199.3" width="1" height="14.3"/><rect x="1138" y="202.9" width="1" height="11.7"/><rect x="1139" y="206.2" width="1" height="12.8"/><rect x="1140" y="209.7" width="1" height="14.9"/><rect x="1141" y="214.5" width="1" height="13.9"/><rect x="1142" y="222.9" width="1" height="9.9"/><rect x="1143" y="223.6" width="1" height="14.0"/><rect x="1144" y="231.3" width="1" height="10.4"/><rect x="1145" y="234.7" width="1" height="14.4"/><rect x="1146" y="238.0" width="1" height="14.5"/><rect x="1147" y="241.5" width="1" height="9.0"/><rect x="1148" y="244.6" width="1" height="12.8"/><rect x="1149" y="246.7" width="1" height="11.7"/><rect x="1150" y="248.0" width="1" height="9.2"/><rect x="1151" y="250.8" width="1" height="10.1"/><rect x="1152" y="254.9" width="1" height="9.4"/><rect x="1153" y="258.7" width="1" height="10.2"/><rect x="1154" y="261.0" width="1" height="12.0"/><rect x="1155" y="264.3" width="1" height="9.3"/><rect x="1156" y="266.6" width="1" height="7.2"/><rect x="1157" y="267.5" width="1" height="6.2"/><rect x="1158" y="265.6" width="1" height="10.4"/><rect x="1159" y="261.2" width="1" height="13.7"/><rect x="1160" y="263.2" width="1" height="6.9"/><rect x="1161" y="260.7" width="1" height="10.9"/><rect x="1162" y="255.6" width="1" height="12.8"/><rect x="1163" y="258.3" width="1" height="10.7"/><rect x="1164" y="252.8" width="1" height="11.5"/></g></svg>
<div class="r" style="left:745px;top:149px;">180</div>
<div class="r" style="left:745px;top:173px;">160</div>
<div class="r" style="left:745px;top:197px;">140</div>
<div class="r" style="left:745px;top:221px;">120</div>
<div class="r" style="left:745px;top:245px;">100</div>
<div class="r" style="left:752px;top:269px;">80</div>
<div class="r" style="left:752px;top:293px;">60</div>
<div class="r" style="left:752px;top:317px;">40</div>
<div class="r" style="left:752px;top:341px;">20</div>
<div class="r" style="left:759px;top:365px;">0</div>
<div class="r" style="left:745px;top:389px;">-20</div>
<div class="r" style="left:745px;top:413px;">-40</div>
<div class="r" style="left:745px;top:437px;">-60</div>
<div class="r" style="left:745px;top:461px;">-80</div>
<div class="r" style="left:738px;top:485px;">-100</div>
<div class="r" style="left:738px;top:510px;">-120</div>
<div class="r" style="left:738px;top:534px;">-140</div>
<div class="r" style="left:1253.5px;top:148px;">0.05</div>
<div class="r" style="left:1253.5px;top:187px;">0.04</div>
<div class="r" style="left:1253.5px;top:226px;">0.03</div>
<div class="r" style="left:1253.5px;top:265px;">0.02</div>
<div class="r" style="left:1253.5px;top:304px;">0.01</div>
<div class="r" style="left:1253.5px;top:343px;">0.00</div>
<div class="r" style="left:1253.5px;top:381px;">-0.01</div>
<div class="r" style="left:1253.5px;top:420px;">-0.02</div>
<div class="r" style="left:1253.5px;top:459px;">-0.03</div>
<div class="r" style="left:1253.5px;top:498px;">-0.04</div>
<div class="r" style="left:1253.5px;top:537px;">-0.05</div>
<div class="r" style="left:761px;top:552px;">0.0</div>
<div class="r" style="left:856px;top:552px;">0.5</div>
<div class="r" style="left:951px;top:552px;">1.0</div>
<div class="r" style="left:1046px;top:552px;">1.5</div>
<div class="r" style="left:1141px;top:552px;">2.0</div>
<div class="r" style="left:1236px;top:552px;">2.5</div></body></html>
